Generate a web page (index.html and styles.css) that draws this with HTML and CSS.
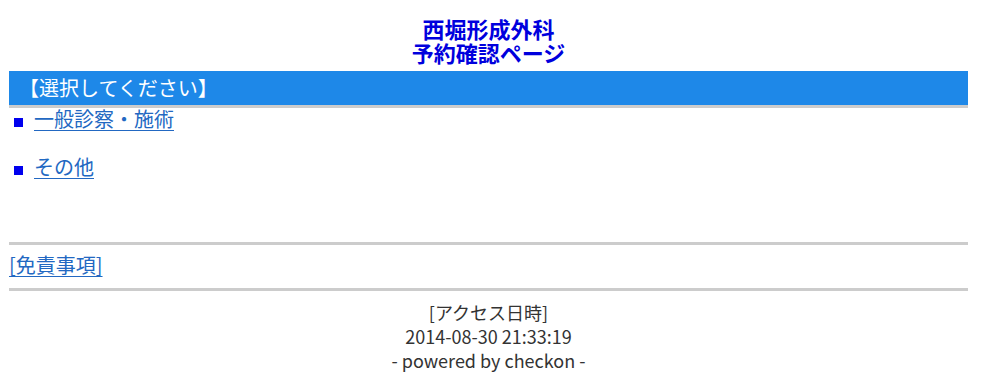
FILE: index.html
```html
<!DOCTYPE html>
<html lang="ja">
<head>
<meta charset="utf-8">
<title>西堀形成外科 予約確認ページ</title>
<link rel="stylesheet" href="styles.css">
</head>
<body>
<div class="page">
  <h1 class="title"><span class="title-line">西堀形成外科</span><span class="title-line">予約確認ページ</span></h1>
  <div class="bar">【選択してください】</div>
  <ul class="menu">
    <li class="item"><span class="bullet"></span><a href="#">一般診察・施術</a></li>
    <li class="item"><span class="bullet"></span><a href="#">その他</a></li>
  </ul>
  <hr class="rule">
  <div class="disclaimer"><a href="#">[免責事項]</a></div>
  <hr class="rule">
  <div class="footer">
    <div>[アクセス日時]</div>
    <div>2014-08-30 21:33:19</div>
    <div>- powered by checkon -</div>
  </div>
</div>
</body>
</html>
```

FILE: styles.css
```css
html, body {
  margin: 0;
  padding: 0;
  background: #ffffff;
}
body {
  font-family: "Noto Sans CJK JP", "Noto Sans", sans-serif;
  color: #333333;
}
.page {
  width: 959px;
  margin-left: 9px;
  padding-top: 16px;
}
.title {
  margin: 0;
  display: flex;
  flex-direction: column;
  align-items: center;
  font-size: 22px;
  font-weight: bold;
  color: #0000dd;
}
.title-line {
  display: block;
  height: 24px;
  line-height: 24px;
}
.bar {
  margin-top: 7px;
  height: 34px;
  line-height: 34px;
  padding-left: 10px;
  background: #1e88e8;
  color: #ffffff;
  font-size: 20px;
  border-bottom: 3px solid #cccccc;
}
.menu {
  list-style: none;
  margin: 0;
  padding: 0;
}
.item {
  display: flex;
  align-items: flex-start;
  height: 28px;
  margin-top: 0;
  margin-bottom: 20px;
  font-size: 20px;
}
.item a {
  line-height: 22px;
}
.bullet {
  align-self: center;
  display: inline-block;
  width: 9px;
  height: 9px;
  background: #0000ee;
  margin-left: 5px;
  margin-right: 11px;
}
a {
  color: #2268c2;
  text-decoration: underline;
  text-underline-offset: 3px;
  text-decoration-thickness: 1px;
}
.rule {
  margin: 0;
  margin-top: 58px;
  border: 0;
  border-top: 3px solid #cccccc;
  height: 0;
}
.disclaimer {
  font-size: 20px;
  height: 40px;
  line-height: 40px;
  padding-bottom: 3px;
}
.disclaimer + .rule {
  margin-top: 0;
}
.footer {
  text-align: center;
  font-size: 18px;
  line-height: 24px;
  padding-top: 9px;
}
```
